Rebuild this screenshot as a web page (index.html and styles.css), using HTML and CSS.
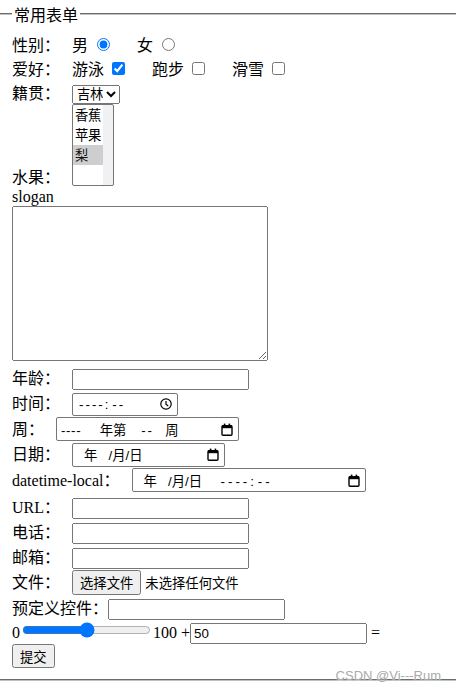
FILE: index.html
```html
<!DOCTYPE html>
<html lang="zh-CN">
<head>
    <meta charset="UTF-8">
    <meta name="viewport" content="width=device-width, initial-scale=1.0">
    <title>常用表单</title>
    <link rel="stylesheet" href="styles.css">
</head>
<body>
    <form class="form" oninput="sum.value = parseInt(a.value) + parseInt(b.value)">
        <fieldset class="box">
            <legend>常用表单</legend>
            <span class="label">性别：</span><label class="opt">男 <input type="radio" name="sex" checked></label><label class="opt">女 <input type="radio" name="sex"></label><br>
            <span class="label">爱好：</span><label class="opt">游泳 <input type="checkbox" checked></label><label class="opt">跑步 <input type="checkbox"></label><label class="opt">滑雪 <input type="checkbox"></label><br>
            <span class="label">籍贯：</span><select class="city">
                <option>北京</option>
                <option selected>吉林</option>
                <option>上海</option>
            </select><br>
            <span class="label">水果：</span><select class="fruit" multiple>
                <option>香蕉</option>
                <option>苹果</option>
                <option selected>梨</option>
            </select><br>
            slogan<br>
            <textarea class="slogan"></textarea><br>
            <span class="label">年龄：</span><input class="text" type="text"><br>
            <span class="label">时间：</span><span class="field time"><span class="val"><span class="dash">----</span>: <span class="dash">--</span></span>
                <svg class="ico" width="12" height="12" viewBox="0 0 12 12"><circle cx="6" cy="6" r="5.2" fill="none" stroke="#000" stroke-width="1.2"/><path d="M6 3v3.2l2.2 1.8" fill="none" stroke="#000" stroke-width="1.2"/></svg>
            </span><br>
            <span class="label">周：</span><span class="field week"><span class="val"><span class="dash thin">----</span>     年第    <span class="dash">--</span>   周</span>
                <svg class="ico" width="12" height="13" viewBox="0 0 12 13"><rect x="1" y="2.8" width="10" height="9.4" rx="1" fill="none" stroke="#000" stroke-width="1.4"/><rect x="1" y="2.2" width="10" height="3" fill="#000"/><rect x="2.8" y="0.6" width="1.6" height="2" fill="#000"/><rect x="7.6" y="0.6" width="1.6" height="2" fill="#000"/></svg>
            </span><br>
            <span class="label">日期：</span><span class="field date"><span class="val">年   /月/日</span>
                <svg class="ico" width="12" height="13" viewBox="0 0 12 13"><rect x="1" y="2.8" width="10" height="9.4" rx="1" fill="none" stroke="#000" stroke-width="1.4"/><rect x="1" y="2.2" width="10" height="3" fill="#000"/><rect x="2.8" y="0.6" width="1.6" height="2" fill="#000"/><rect x="7.6" y="0.6" width="1.6" height="2" fill="#000"/></svg>
            </span><br>
            <span class="label">datetime-local：</span><span class="field datetime"><span class="val">年   /月/日     <span class="dash wide">----</span>: <span class="dash wide">--</span></span>
                <svg class="ico" width="12" height="13" viewBox="0 0 12 13"><rect x="1" y="2.8" width="10" height="9.4" rx="1" fill="none" stroke="#000" stroke-width="1.4"/><rect x="1" y="2.2" width="10" height="3" fill="#000"/><rect x="2.8" y="0.6" width="1.6" height="2" fill="#000"/><rect x="7.6" y="0.6" width="1.6" height="2" fill="#000"/></svg>
            </span><br>
            <span class="label">URL：</span><input class="text" type="url"><br>
            <span class="label">电话：</span><input class="text" type="tel"><br>
            <span class="label">邮箱：</span><input class="text" type="email"><br>
            <span class="label">文件：</span><button class="pick" type="button">选择文件</button><span class="nofile">未选择任何文件</span><br>
            <span class="label tight">预定义控件：</span><input class="text" type="text" list="cars">
            <datalist id="cars">
                <option value="BMW"></option>
                <option value="Audi"></option>
            </datalist><br>
            0<input type="range" id="a" value="50" min="0" max="100">100 +<input class="text" type="number" id="b" value="50"> =<output name="sum" for="a b"></output><br>
            <input class="send" type="submit" value="提交">
        </fieldset>
    </form>
    <div class="mark">CSDN @Vi---Rum</div>
</body>
</html>
```

FILE: styles.css
```css
body {
    margin: 0;
    font-family: "Liberation Serif", "Noto Sans CJK SC", serif;
    font-size: 16px;
    color: #000;
}

.box {
    margin: 2px 0 0 0;
    padding: 0.35em 12px 11px 12px;
    border: none;
    border-top: 2px groove #c0c0c0;
    border-bottom: 2px groove #c0c0c0;
}

.box legend {
    padding: 0 2px;
}

.label {
    margin-right: 12px;
}

.label.tight {
    margin-right: 0;
}

.opt {
    margin-right: 24px;
}

.fruit {
    width: 42px;
    padding-right: 10px;
    background: linear-gradient(to left, #f1f1f3 10px, #fff 10px);
}

.slogan {
    width: 256px;
    height: 155px;
    box-sizing: border-box;
}

.text {
    width: 177px;
    box-sizing: border-box;
}

.field {
    display: inline-flex;
    align-items: center;
    justify-content: space-between;
    box-sizing: border-box;
    height: 24px;
    padding: 0 5px 0 6px;
    border: 1px solid #767676;
    border-radius: 2px;
    font-family: "Liberation Sans", "Noto Sans CJK SC", sans-serif;
    font-size: 13.33px;
    white-space: pre;
}

.field .dash {
    letter-spacing: 2px;
}

.field .dash.thin {
    letter-spacing: 0.6px;
}

.field .dash.wide {
    letter-spacing: 3px;
}

.time {
    width: 106px;
    height: 23px;
    margin-top: 1px;
}

.week {
    width: 183px;
    padding-left: 4px;
}

.date {
    width: 153px;
    padding-left: 11px;
}

.datetime {
    width: 234px;
    padding-left: 11px;
    margin-bottom: 2px;
}

.pick {
    height: 25px;
    margin-top: 1px;
    font-family: "Liberation Sans", "Noto Sans CJK SC", sans-serif;
    font-size: 13.33px;
}

.nofile {
    margin-left: 4px;
    font-family: "Liberation Sans", "Noto Sans CJK SC", sans-serif;
    font-size: 13.33px;
}

.send {
    height: 24px;
    font-family: "Liberation Serif", "Noto Sans CJK SC", serif;
    font-size: 13.33px;
}

.mark {
    position: absolute;
    right: 15px;
    bottom: 9px;
    font-family: "Liberation Sans", "Noto Sans CJK SC", sans-serif;
    font-size: 13px;
    color: #aaa;
    text-shadow: 0 0 2px #fff;
}
```
